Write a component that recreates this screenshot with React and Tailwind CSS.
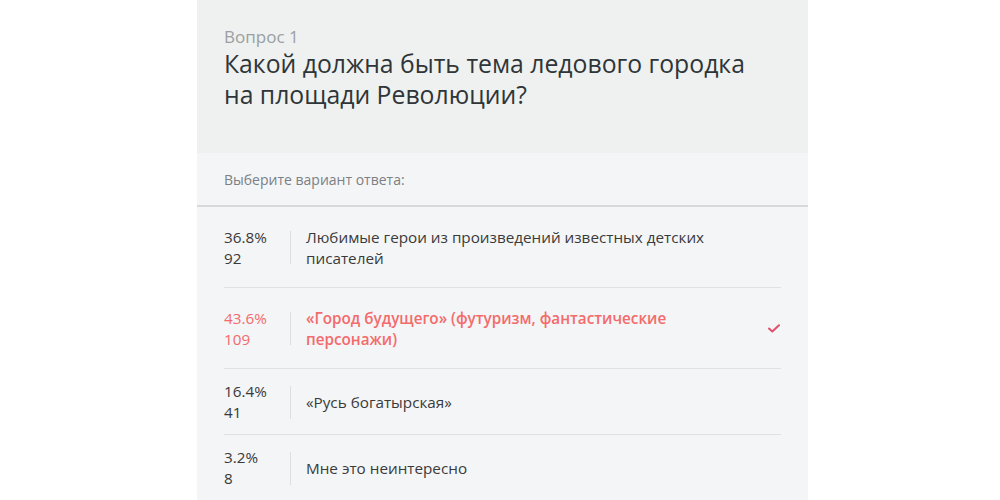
import React from "react";

const answers = [
  { pct: "36.8%", count: "92", text: "Любимые герои из произведений известных детских писателей" },
  { pct: "43.6%", count: "109", text: "«Город будущего» (футуризм, фантастические персонажи)", chosen: true },
  { pct: "16.4%", count: "41", text: "«Русь богатырская»" },
  { pct: "3.2%", count: "8", text: "Мне это неинтересно" },
];

const AnswerRow = ({ answer, last }) => {
  const color = answer.chosen ? "text-[#f36b6b]" : "text-[#3a3a3a]";
  return (
    <div className={`flex items-center pt-[12px] pb-[11px] ${last ? "" : "border-b border-[#dfe1e4]"}`}>
      <div className={`w-[66px] shrink-0 text-[15.25px] leading-[21px] ${color}`}>
        <div>{answer.pct}</div>
        <div>{answer.count}</div>
      </div>
      <div className="h-[33px] w-px shrink-0 bg-[#dcdfe2]" />
      <div className={`ml-[15px] w-[420px] py-[7.5px] text-[15.25px] leading-[21px] ${color} ${answer.chosen ? "font-semibold" : ""}`}>
        {answer.text}
      </div>
      {answer.chosen && (
        <svg className="ml-auto mr-[1px]" width="12" height="9" viewBox="0 0 12 9" fill="none">
          <path d="M1 4.5L4.3 7.5L11 1.2" stroke="#e3506d" strokeWidth="2" strokeLinecap="round" strokeLinejoin="round" />
        </svg>
      )}
    </div>
  );
};

const App = () => {
  return (
    <div className="h-[500px] w-[1000px] overflow-hidden bg-white font-['Open_Sans',sans-serif]">
      <div className="ml-[197px] h-full w-[611px] bg-[#f4f5f7]">
        <div className="h-[153px] bg-[#eef1f0] px-[27px] pt-[26px]">
          <div className="text-[17px] leading-[22px] text-[#9aa0a3]">Вопрос 1</div>
          <h1 className="text-[24.75px] leading-[31px] text-[#2f3538]">
            Какой должна быть тема ледового городка
            <br />
            на площади Революции?
          </h1>
        </div>
        <div className="border-b-2 border-[#d6d9dc] px-[27px] pt-[17px] pb-[15px] text-[14px] leading-[20px] text-[#7b8084]">
          Выберите вариант ответа:
        </div>
        <div className="px-[27px]">
          {answers.map((a, i) => (
            <AnswerRow key={i} answer={a} last={i === answers.length - 1} />
          ))}
        </div>
      </div>
    </div>
  );
};

export default App;
